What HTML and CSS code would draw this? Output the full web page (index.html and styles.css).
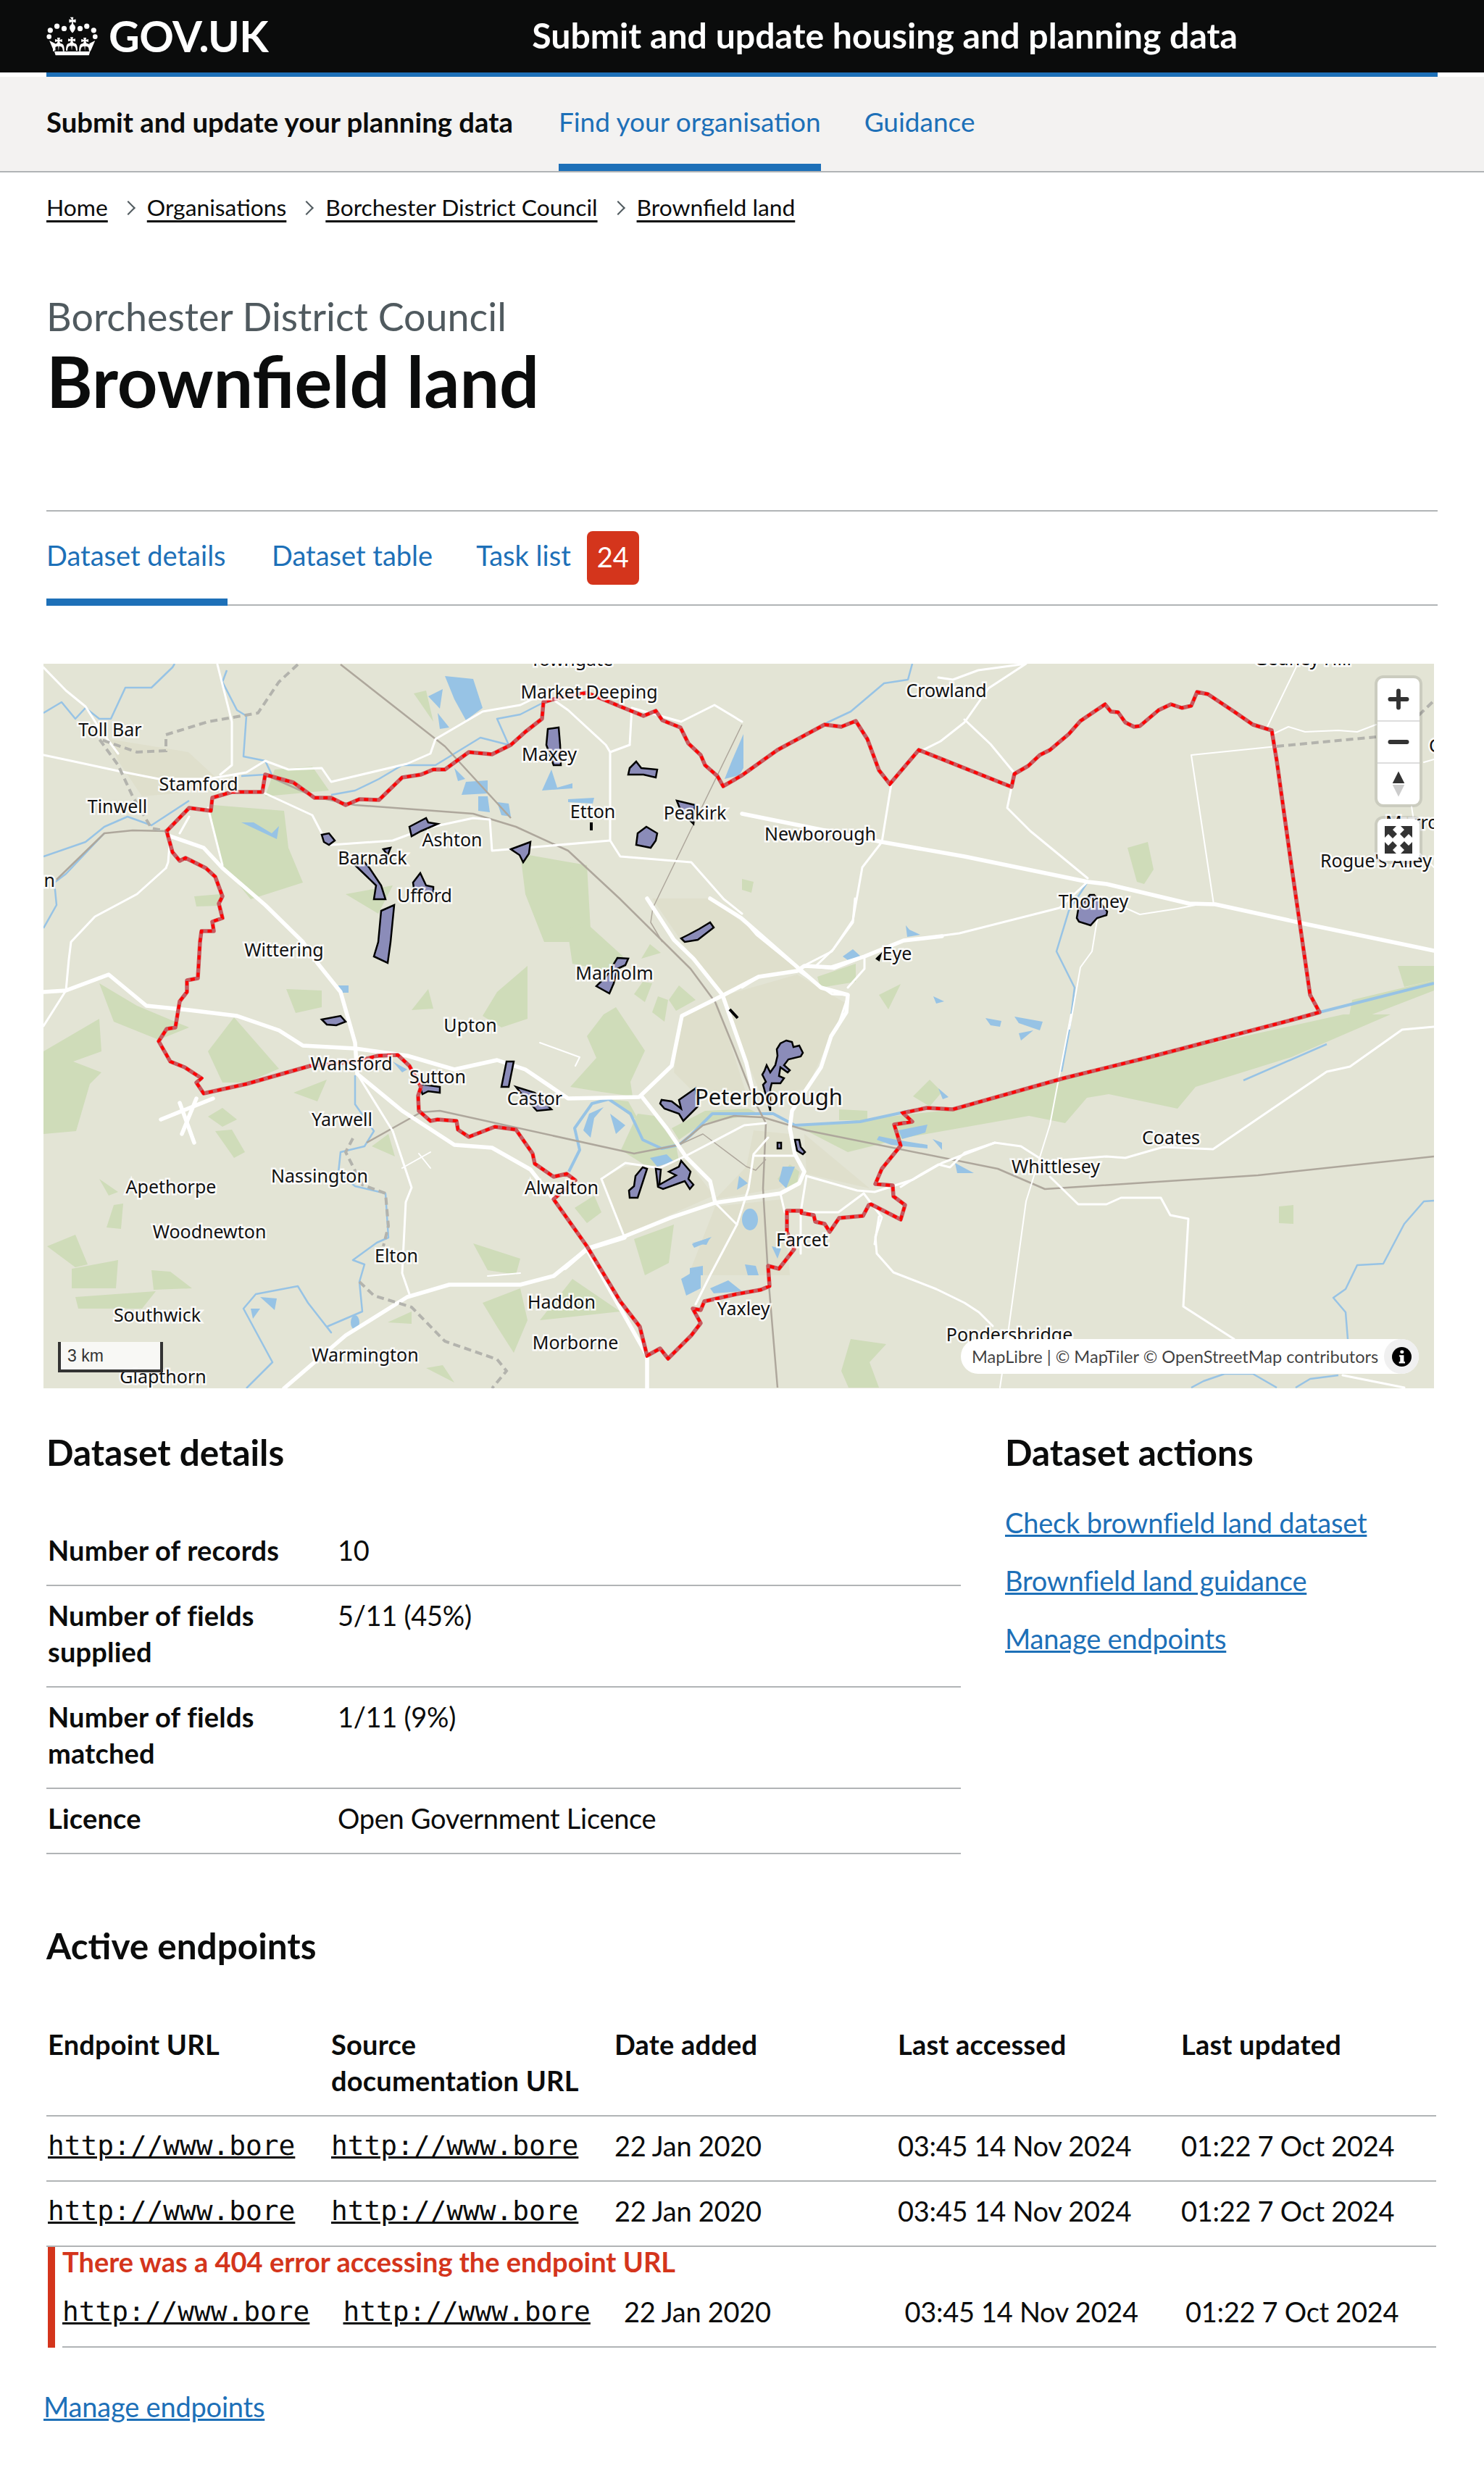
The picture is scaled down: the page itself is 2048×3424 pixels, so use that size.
FILE: index.html
```html
<!DOCTYPE html>
<html lang="en">
<head>
  <meta charset="utf-8">
  <title>Brownfield land - Submit and update housing and planning data</title>
  <link rel="stylesheet" href="styles.css">
</head>
<body>

<header class="top-bar">
  <a class="logo" href="#">
    <svg class="crown" viewBox="25 28 216 164" aria-hidden="true">
      <g fill="#fff">
        <circle cx="40" cy="85" r="11"/><circle cx="68" cy="68" r="11"/><circle cx="98" cy="78" r="11"/>
        <circle cx="165" cy="78" r="11"/><circle cx="193" cy="68" r="11"/><circle cx="222" cy="85" r="11"/>
        <circle cx="35" cy="112" r="10"/><circle cx="228" cy="112" r="10"/>
        <path d="M123 30h14l-2 12 12-3v14l-12-3 2 10c6 4 8 10 8 14 0 8-6 16-12 22-6-6-12-14-12-22 0-4 2-10 8-14l2-10-12 3V39l12 3z"/>
        <path d="M57 174h150l-5 16H62z"/>
        <path d="M36 128l24 12 2 30h-8zM228 128l-24 12-2 30h8z"/>
        <path id="fleur" d="M124 114h12l-2 9 11-3v12l-11-3 2 8 10 4c6 4 8 12 8 30h-6c0-12-4-20-10-20l-6-1-2 21-2-21-6 1c-6 0-10 8-10 20h-6c0-18 2-26 8-30l10-4 2-8-11 3v-12l11 3z"/>
        <use href="#fleur" x="-55" y="2"/>
        <use href="#fleur" x="55" y="2"/>
      </g>
    </svg>
    <span class="logo-text">GOV.UK</span>
  </a>
  <a class="service-title" href="#">Submit and update housing and planning data</a>
</header>
<div class="blue-rule"></div>

<nav class="service-nav">
  <strong class="service-name">Submit and update your planning data</strong>
  <a class="service-link active" href="#">Find your organisation</a>
  <a class="service-link" href="#">Guidance</a>
</nav>

<main class="page">
  <ol class="breadcrumbs">
    <li><a href="#">Home</a></li>
    <li><a href="#">Organisations</a></li>
    <li><a href="#">Borchester District Council</a></li>
    <li><a href="#">Brownfield land</a></li>
  </ol>

  <span class="caption">Borchester District Council</span>
  <h1 class="title">Brownfield land</h1>

  <div class="tabs">
    <a class="tab active" href="#">Dataset details</a>
    <a class="tab" href="#">Dataset table</a>
    <a class="tab" href="#">Task list</a>
    <span class="badge">24</span>
  </div>

  <div class="map">
    <svg class="map-canvas" viewBox="60 916 1919 1000" aria-label="Map of Borchester District Council">
      <!-- built up -->
      <g class="urban">
        <polygon points="900,1240 980,1240 1047,1290 1103,1340 1047,1348 993,1373 957,1323"/>
        <polygon points="995,1375 1100,1345 1168,1385 1147,1430 1113,1503 1050,1510 1025,1450"/>
        <polygon points="940,1400 990,1383 1030,1510 960,1510 930,1480"/>
        <polygon points="1040,1560 1090,1565 1105,1620 1075,1640 987,1655 1030,1610"/>
        <polygon points="1110,1565 1200,1640 1113,1620"/>
        <polygon points="830,1627 863,1610 947,1600 985,1650 860,1705"/>
        <polygon points="150,1020 260,1038 300,1075 287,1091 196,1099 163,1050"/>
        <polygon points="987,1665 1080,1655 1090,1760 950,1760"/>
      </g>
      <!-- woodland -->
      <g class="wood">
        <polygon points="294,1111 392,1119 398,1170 418,1218 346,1241 304,1190 291,1123"/>
        <polygon points="379,1062 431,1058 454,1091 366,1099"/>
        <polygon points="718,1178 810,1194 816,1300 751,1300 725,1234"/>
        <polygon points="477,1234 542,1222 522,1261"/>
        <polygon points="268,1237 304,1234 304,1250 271,1251"/>
        <polygon points="571,957 588,953 598,996"/>
        <polygon points="60,1451 137,1406 140,1451 101,1465 140,1480 124,1496 105,1561 60,1565"/>
        <polygon points="137,1357 189,1388 261,1418 219,1435 157,1410"/>
        <polygon points="287,1451 323,1404 385,1475 340,1494 307,1494"/>
        <polygon points="405,1508 451,1490 438,1520"/>
        <polygon points="287,1541 307,1529 327,1545 307,1555"/>
        <polygon points="297,1561 320,1559 338,1590 323,1598"/>
        <polygon points="513,1582 536,1565 545,1596"/>
        <polygon points="395,1365 444,1367 444,1390 408,1398"/>
        <polygon points="568,1394 591,1365 598,1392"/>
        <polygon points="666,1402 686,1369 728,1333 728,1406 692,1418"/>
        <polygon points="787,1500 823,1460 810,1430 833,1400 850,1390 870,1420 890,1450 870,1493 873,1513 830,1507"/>
        <polygon points="783,1283 807,1272 860,1320 840,1340 790,1330"/>
        <polygon points="875,1372 887,1355 900,1357 890,1383"/>
        <polygon points="900,1397 908,1375 922,1380 917,1410"/>
        <polygon points="885,1323 897,1303 912,1315"/>
        <polygon points="923,1380 937,1360 960,1380 933,1395"/>
        <polygon points="880,1537 903,1540 933,1580 937,1603 893,1610 857,1587"/>
        <polygon points="840,1517 867,1520 882,1547 870,1540"/>
        <polygon points="927,1557 973,1533 1033,1530 1047,1537 970,1550 937,1573"/>
        <polygon points="1073,1627 1090,1607 1103,1617 1100,1633 1087,1640"/>
        <polygon points="793,1667 820,1650 830,1673 810,1688"/>
        <polygon points="875,1710 930,1690 923,1743 890,1760"/>
        <polygon points="653,1716 718,1737 712,1759 673,1753"/>
        <polygon points="666,1798 718,1778 728,1822 709,1867 686,1831"/>
        <polygon points="745,1822 790,1765 856,1810"/>
        <polygon points="104,1704 121,1745 104,1749 65,1720"/>
        <polygon points="147,1694 157,1663 170,1661 167,1696"/>
        <polygon points="99,1751 163,1739 160,1778 99,1778"/>
        <polygon points="209,1753 235,1755 265,1778 212,1780"/>
        <polygon points="104,1790 215,1782 196,1806 108,1806"/>
        <polygon points="137,1627 163,1645 150,1650"/>
        <polygon points="535,1825 568,1810 568,1827"/>
        <polygon points="588,1888 611,1884 627,1908"/>
        <polygon points="1102,1555 1318,1531 1468,1490 1586,1459 1854,1400 1919,1400 1782,1459 1650,1500 1625,1530 1530,1510 1500,1515 1470,1550 1420,1540 1250,1570 1170,1590"/>
        <polygon points="1866,1380 1979,1353 1979,1367 1860,1413"/>
        <polygon points="1929,1333 1979,1333 1979,1353 1938,1362"/>
        <polygon points="1556,1170 1584,1162 1592,1200 1579,1220 1569,1217"/>
        <polygon points="1128,1348 1181,1330 1181,1355 1132,1363"/>
        <polygon points="1213,1373 1243,1358 1226,1393"/>
        <polygon points="1024,1213 1040,1217 1037,1232 1024,1228"/>
        <polygon points="1260,1513 1283,1490 1300,1507 1283,1527"/>
        <polygon points="1765,1665 1785,1663 1785,1689 1765,1688"/>
        <polygon points="1174,1848 1223,1855 1200,1880 1213,1915 1171,1915 1161,1892"/>
        <polygon points="1158,1531 1197,1533 1197,1546 1158,1546"/>
      </g>
      <!-- water -->
      <g class="lake">
        <polygon points="614,933 653,937 666,977 643,994 627,965"/>
        <polygon points="591,961 611,951 607,978"/>
        <polygon points="604,984 620,1004 607,1006"/>
        <polygon points="627,1060 642,1075 632,1078"/>
        <polygon points="643,1079 673,1077 673,1095 637,1097"/>
        <polygon points="660,1099 673,1099 676,1121 660,1119"/>
        <polygon points="686,1107 702,1109 705,1127 692,1125"/>
        <polygon points="761,1062 769,1087 790,1081 790,1088 748,1091"/>
        <polygon points="784,1103 820,1101 818,1109 784,1107"/>
        <polygon points="1026,1013 1010,1050 1000,1075 1020,1070 1026,1060"/>
        <polygon points="333,1135 350,1135 375,1150 385,1140 382,1158 365,1150"/>
        <polygon points="805,1560 813,1537 833,1528 820,1543 815,1570"/>
        <polygon points="842,1537 863,1553 850,1565"/>
        <polygon points="897,1598 920,1593 930,1603 907,1610"/>
        <polygon points="1080,1610 1097,1610 1085,1640 1075,1630"/>
        <polygon points="1020,1623 1032,1633 1017,1642"/>
        <ellipse cx="1035" cy="1683" rx="11" ry="15"/>
        <polygon points="955,1717 982,1707 975,1715 958,1722"/>
        <polygon points="1065,1720 1078,1723 1073,1737"/>
        <polygon points="952,1750 970,1747 970,1760 952,1760"/>
        <polygon points="1028,1745 1043,1747 1047,1760 1032,1760"/>
        <polygon points="1163,1320 1177,1310 1188,1320 1170,1325"/>
        <polygon points="1250,1277 1255,1283 1270,1290 1252,1293"/>
        <polygon points="1288,1375 1303,1382 1292,1385"/>
        <polygon points="1213,1568 1237,1573 1280,1580 1280,1585 1230,1580 1210,1573"/>
        <polygon points="1240,1560 1280,1552 1277,1563 1245,1572"/>
        <polygon points="1287,1572 1300,1577 1300,1587"/>
        <polygon points="1360,1405 1382,1409 1380,1417 1367,1415"/>
        <polygon points="1400,1403 1439,1410 1435,1422 1406,1412"/>
        <polygon points="1406,1426 1426,1422 1409,1436"/>
        <polygon points="1295,1502 1309,1514 1301,1517"/>
        <polygon points="1318,1605 1344,1619 1321,1619"/>
        <polygon points="467,1360 481,1360 481,1370 467,1370"/>
        <polygon points="542,1465 562,1476 555,1480"/>
        <polygon points="940,1765 967,1749 967,1778 947,1788"/>
        <polygon points="980,1778 1005,1767 1024,1782 985,1785"/>
        <polygon points="955,1716 980,1708 975,1718"/>
        <polygon points="359,1790 382,1792 379,1808"/>
        <polygon points="346,1806 359,1806 349,1820"/>
        <ellipse cx="490" cy="1825" rx="6" ry="10"/>
      </g>
      <g class="river">
        <polyline points="60,984 85,969 104,992 118,977 137,992 153,992 173,949 209,949 238,921 241,916"/>
        <polyline points="313,925 307,941 327,980 340,988 336,1044 366,1050 375,1069"/>
        <polyline points="333,1071 366,1069"/>
        <polyline points="457,1097 490,1091 523,1075 555,1056 601,1056 663,1018 702,1028 686,992 718,986 751,969"/>
        <polyline points="60,1182 118,1162 144,1141 176,1127 209,1139 261,1105"/>
        <polyline points="60,1281 78,1249 75,1218 91,1206 144,1150"/>
        <polyline points="490,1484 490,1524 516,1561 503,1582 470,1590 467,1618 490,1637 532,1647 536,1708 520,1715 487,1739 503,1745 496,1769 500,1810 451,1831 457,1839 425,1798 411,1775 353,1786 336,1806 376,1880 340,1916"/>
        <polyline class="wide" points="785,1617 800,1587 793,1557 817,1523 840,1517 870,1537 887,1573 913,1585 937,1580 953,1567 983,1537 1067,1537 1097,1553 1187,1548 1247,1535 1255,1533"/>
        <polyline class="wide" points="1821,1397 1979,1357"/>
        <polyline points="1716,1491 1831,1441"/>
        <polyline points="1259,916 1253,938 1220,943 1174,982 1142,997 1073,1035"/>
        <polyline points="1501,1217 1475,1257 1458,1313 1483,1363 1476,1420 1465,1479"/>
        <polyline points="1979,1657 1965,1658 1938,1689 1909,1744 1873,1746 1857,1779 1840,1791 1857,1811 1860,1848"/>
        <polyline points="1644,1915 1661,1906 1690,1896 1729,1896 1762,1915"/>
        <polyline points="1788,1915 1808,1903 1847,1898"/>
      </g>
      <!-- railways -->
      <g class="rail">
        <polyline points="470,917 614,1030 705,1129"/>
        <polyline points="366,1069 435,1100 490,1111 653,1123 712,1141 784,1174 855,1240 953,1337 987,1383 1013,1447 1043,1523 1057,1550 1053,1640 1060,1760 1073,1915"/>
        <polyline points="78,1214 144,1150 183,1146 230,1147"/>
        <polyline points="506,1577 581,1535 607,1533 875,1592 937,1580 970,1553 1013,1540 1053,1542 1113,1560 1377,1613 1442,1641 1736,1622 1979,1596"/>
        <polyline class="thin" points="937,1580 970,1565 1030,1610 1043,1615 1057,1600"/>
        <polyline class="thin" points="1024,1000 901,1253 898,1273 914,1300"/>
      </g>
      <!-- roads -->
      <g class="road">
        <polyline points="60,921 91,953 118,975 137,1005 163,1040"/>
        <polyline points="60,1042 98,1050 163,1064 219,1075 287,1075 340,1066 366,1050 398,1062 444,1060 457,1079 562,1054 594,1040 601,1020 666,982 718,973 751,957 784,980 836,1028 842,1038 842,1160 856,1182 954,1190 999,1241 1024,1261"/>
        <polyline points="300,917 320,996 320,1056 304,1069"/>
        <polyline class="major" points="235,1154 281,1170 307,1198 366,1249 418,1300 438,1329 470,1369 490,1439 493,1482 555,1533 627,1580 679,1584 732,1614 764,1655"/>
        <polyline points="366,1095 431,1125 444,1150 457,1166 542,1160 588,1143 653,1129 676,1131 679,1174 842,1160"/>
        <polyline points="869,1028 872,977 940,996 986,973 1024,996"/>
        <polyline points="842,1038 869,1028"/>
        <polyline class="major" points="60,1369 91,1367 150,1345 202,1388 261,1394 327,1402 385,1422 418,1443 490,1447 562,1457 627,1476 686,1463 725,1476 784,1516 882,1514 927,1471 941,1402 999,1373 1047,1348 1100,1340 1110,1333 1147,1335 1193,1320 1247,1298 1300,1292"/>
        <polyline class="major" points="893,1240 930,1297 957,1323 997,1373 1017,1430 1030,1467 1043,1523"/>
        <polyline class="major" points="980,1240 1023,1267 1103,1337 1133,1363 1170,1373 1168,1397 1147,1430 1133,1473 1113,1503 1093,1533 1090,1557 1097,1593 1110,1617 1103,1633 1077,1647 987,1660 927,1680 860,1707 810,1723 780,1750 810,1724 893,1871 893,1916"/>
        <polyline points="1180,1240 1177,1273 1150,1310 1127,1332"/>
        <polyline points="1193,1323 1193,1337 1170,1363"/>
        <polyline class="major" points="887,1515 920,1557 947,1597 980,1630 987,1660"/>
        <polyline points="947,1595 1027,1553 1057,1550"/>
        <polyline points="830,1627 863,1605 910,1612 947,1595"/>
        <polyline points="830,1627 862,1708"/>
        <polyline points="1113,1623 1183,1643 1207,1645 1260,1628 1300,1605 1373,1577"/>
        <polyline points="1113,1623 1105,1673 1105,1730"/>
        <polyline points="1077,1647 1083,1673"/>
        <polyline points="987,1660 1017,1690 1033,1640 1040,1593 1060,1570"/>
        <polyline points="1040,1595 1097,1595"/>
        <polyline points="1017,1690 980,1760 960,1800"/>
        <polyline points="1192,1647 1217,1680 1208,1707 1210,1730 1233,1756 1292,1779 1331,1798 1351,1811 1370,1830"/>
        <polyline points="1113,1673 1157,1673 1192,1647"/>
        <polyline points="1243,1638 1272,1620 1295,1607 1311,1611 1331,1591 1373,1577 1409,1582 1442,1603 1527,1596 1553,1598 1605,1583 1674,1586 1831,1479 1863,1472 1935,1421 1979,1417"/>
        <polyline points="1449,1624 1488,1662 1527,1662 1547,1653 1602,1653 1615,1677 1640,1682 1633,1803 1703,1848"/>
        <polyline class="fine" points="1478,1400 1449,1552 1416,1658 1390,1848 1380,1915"/>
        <polyline class="major" points="1024,1123 1217,1162 1331,1182 1501,1217 1527,1220 1641,1247 1677,1248 1801,1275 1979,1312"/>
        <polyline points="1295,935 1315,938 1350,925 1416,916 1364,950 1331,997 1298,1023 1268,1038"/>
        <polyline points="1331,993 1367,1027 1400,1067 1390,1115 1422,1147 1501,1212"/>
        <polyline points="1230,1082 1217,1162 1190,1197 1177,1270 1148,1313 1109,1333"/>
        <polyline points="1501,1217 1462,1253 1324,1288 1249,1298 1151,1337 1109,1333"/>
        <polyline points="1024,1267 1044,1290 1102,1337"/>
        <polyline points="1024,1363 1050,1347 1102,1340 1148,1372 1171,1373 1155,1420"/>
        <polyline class="fine" points="1514,1270 1507,1313 1491,1335 1476,1420"/>
        <polyline class="fine" points="1553,1253 1573,1262 1625,1254 1665,1246"/>
        <polyline class="fine" points="1762,1030 1644,1042 1675,1248"/>
        <polyline class="fine" points="1791,916 1749,1003"/>
        <polyline class="fine" points="1759,1012 1778,1003 1801,1010 1847,1008 1873,1010 1899,1000"/>
        <polyline class="fine" points="1965,1052 1979,1048"/>
        <polyline class="fine" points="1948,1113 1958,1177 1979,1197"/>
        <polyline points="229,1198 189,1234 131,1265 98,1300 95,1324 91,1367 60,1416"/>
        <polyline points="235,1154 232,1190 229,1198"/>
        <polyline points="261,1127 248,1150"/>
        <polyline points="287,1115 307,1194"/>
        <polyline class="major" points="222,1545 294,1516"/>
        <polyline class="major" points="248,1522 268,1577"/>
        <polyline class="major" points="271,1516 251,1565"/>
        <polyline class="fine" points="555,1612 594,1590"/>
        <polyline class="fine" points="578,1592 594,1612"/>
        <polyline class="fine" points="673,1761 718,1757"/>
        <polyline class="fine" points="745,1439 800,1459 794,1471"/>
        <polyline points="493,1482 542,1561 568,1639 560,1659 555,1757 565,1786"/>
        <polyline class="major" points="392,1916 477,1843 562,1790 620,1773 718,1773 764,1761 810,1724 862,1708"/>
        <polyline points="1853,1898 1938,1915"/>
        <polyline points="1213,1679 1207,1717"/>
      </g>
      <g class="border-dash">
        <polyline points="411,917 385,941 356,984 287,996 229,1014 229,1036 189,1038 137,1020 163,1056 183,1099 209,1143 230,1147"/>
        <polyline points="487,1571 477,1590 500,1635 532,1647 536,1692 529,1720"/>
        <polyline points="496,1769 516,1788 568,1804 614,1851 686,1876 699,1892 679,1916"/>
        <polyline points="1762,1030 1899,1017"/>
        <polyline points="1958,987 1979,967"/>
      </g>
      <!-- sites -->
      <g class="site">
        <polygon points="940,1295 950,1290 965,1282 980,1273 985,1280 963,1297 945,1300"/>
        <polygon points="852,1322 867,1323 863,1332 852,1337 847,1357 841,1371 823,1361 837,1347"/>
        <polygon points="1085,1436 1093,1438 1095,1445 1103,1443 1108,1453 1105,1458 1088,1462 1082,1470 1090,1477 1087,1480 1077,1473 1075,1485 1082,1488 1077,1495 1065,1495 1063,1503 1063,1533 1053,1497 1057,1493 1052,1483 1055,1478 1058,1470 1063,1480 1070,1470 1073,1457 1072,1448 1077,1440"/>
        <polygon points="960,1502 963,1527 943,1547 937,1537 917,1530 911,1523 913,1518 927,1520 940,1530 937,1518"/>
        <polygon points="887,1611 893,1613 880,1653 869,1653 868,1643 875,1637 877,1623"/>
        <polygon points="905,1613 912,1614 910,1635 933,1622 923,1617 937,1610 940,1602 953,1617 950,1627 957,1635 952,1641 945,1630 915,1641 908,1638"/>
        <rect x="1073" y="1577" width="5" height="8"/>
        <polygon points="1097,1573 1103,1573 1105,1583 1111,1590 1108,1593 1100,1588"/>
        <polygon points="1210,1323 1215,1318 1213,1325"/>
        <polygon points="1504,1235 1510,1235 1528,1258 1527,1263 1514,1267 1505,1277 1489,1272 1486,1267 1488,1255"/>
        <polygon points="756,1006 771,1004 773,1028 774,1056 764,1056 754,1028"/>
        <polygon points="878,1051 885,1060 907,1062 905,1073 888,1069 867,1069 869,1060"/>
        <polygon points="934,1105 959,1111 957,1137 940,1120"/>
        <polygon points="880,1150 892,1141 907,1150 905,1160 898,1170 878,1166"/>
        <polygon points="565,1141 588,1129 591,1135 604,1137 581,1147 568,1154"/>
        <polygon points="705,1172 732,1162 730,1178 722,1190 717,1180"/>
        <polygon points="444,1152 454,1150 462,1160 454,1166 447,1162"/>
        <polygon points="490,1194 503,1190 510,1198 526,1222 532,1241 516,1241 519,1222"/>
        <polygon points="529,1172 539,1170 535,1180"/>
        <polygon points="570,1218 580,1205 588,1222 598,1224 598,1233 572,1232"/>
        <polygon points="526,1257 544,1249 539,1300 535,1329 516,1320 522,1300"/>
        <polygon points="444,1407 470,1402 477,1410 464,1415 451,1414"/>
        <polygon points="578,1496 607,1500 607,1508 591,1506 583,1510"/>
        <polygon points="699,1465 709,1465 702,1500 692,1500"/>
        <polygon points="712,1500 738,1508 761,1531 741,1533 720,1510"/>
        <polyline points="1007,1393 1018,1405"/>
        <polyline points="816,1135 816,1146"/>
      </g>
      <!-- organisation boundary -->
      <polygon class="boundary" points="230,1147 261,1115 291,1119 293,1101 320,1093 362,1093 366,1069 405,1080 434,1101 457,1101 477,1111 496,1103 523,1104 555,1073 581,1069 598,1062 614,1062 647,1038 679,1041 705,1028 725,1010 748,992 750,969 771,963 810,956 856,975 888,988 905,981 914,994 939,1004 950,1026 967,1042 973,1056 990,1071 998,1085 1024,1070 1073,1035 1138,1000 1161,1003 1181,995 1197,1020 1213,1063 1228,1082 1268,1035 1396,1086 1400,1068 1419,1057 1435,1042 1449,1035 1475,1013 1491,995 1525,972 1533,982 1543,983 1553,997 1565,1003 1573,1002 1599,980 1616,972 1631,977 1644,974 1652,955 1667,958 1703,982 1729,1000 1755,1008 1762,1050 1782,1193 1808,1373 1821,1397 1785,1407 1586,1459 1468,1488 1315,1531 1279,1529 1246,1536 1259,1548 1234,1552 1243,1581 1217,1613 1208,1634 1232,1636 1233,1651 1249,1663 1243,1683 1202,1662 1199,1663 1191,1678 1158,1681 1145,1700 1138,1689 1125,1686 1123,1677 1106,1674 1106,1671 1086,1671 1086,1700 1096,1724 1075,1751 1060,1747 1062,1775 1050,1780 1016,1786 972,1796 967,1808 956,1806 967,1826 954,1843 922,1875 911,1861 893,1871 883,1831 856,1796 810,1720 764,1655 794,1629 782,1620 764,1624 738,1606 735,1592 712,1559 683,1555 647,1569 632,1559 630,1547 604,1545 594,1547 578,1533 577,1512 581,1500 565,1471 549,1456 522,1457 490,1465 428,1471 340,1496 281,1509 271,1494 278,1488 255,1473 235,1465 219,1437 230,1420 242,1418 248,1382 258,1369 258,1353 273,1350 276,1300 278,1285 295,1285 293,1272 307,1267 302,1247 307,1237 297,1210 284,1198 256,1184 248,1188 238,1176"/>
      <polygon class="boundary-dash" points="230,1147 261,1115 291,1119 293,1101 320,1093 362,1093 366,1069 405,1080 434,1101 457,1101 477,1111 496,1103 523,1104 555,1073 581,1069 598,1062 614,1062 647,1038 679,1041 705,1028 725,1010 748,992 750,969 771,963 810,956 856,975 888,988 905,981 914,994 939,1004 950,1026 967,1042 973,1056 990,1071 998,1085 1024,1070 1073,1035 1138,1000 1161,1003 1181,995 1197,1020 1213,1063 1228,1082 1268,1035 1396,1086 1400,1068 1419,1057 1435,1042 1449,1035 1475,1013 1491,995 1525,972 1533,982 1543,983 1553,997 1565,1003 1573,1002 1599,980 1616,972 1631,977 1644,974 1652,955 1667,958 1703,982 1729,1000 1755,1008 1762,1050 1782,1193 1808,1373 1821,1397 1785,1407 1586,1459 1468,1488 1315,1531 1279,1529 1246,1536 1259,1548 1234,1552 1243,1581 1217,1613 1208,1634 1232,1636 1233,1651 1249,1663 1243,1683 1202,1662 1199,1663 1191,1678 1158,1681 1145,1700 1138,1689 1125,1686 1123,1677 1106,1674 1106,1671 1086,1671 1086,1700 1096,1724 1075,1751 1060,1747 1062,1775 1050,1780 1016,1786 972,1796 967,1808 956,1806 967,1826 954,1843 922,1875 911,1861 893,1871 883,1831 856,1796 810,1720 764,1655 794,1629 782,1620 764,1624 738,1606 735,1592 712,1559 683,1555 647,1569 632,1559 630,1547 604,1545 594,1547 578,1533 577,1512 581,1500 565,1471 549,1456 522,1457 490,1465 428,1471 340,1496 281,1509 271,1494 278,1488 255,1473 235,1465 219,1437 230,1420 242,1418 248,1382 258,1369 258,1353 273,1350 276,1300 278,1285 295,1285 293,1272 307,1267 302,1247 307,1237 297,1210 284,1198 256,1184 248,1188 238,1176"/>
      <!-- place names -->
      <g class="place">
        <text x="789" y="919">Towngate</text>
        <text x="1798" y="918">Gedney Hill</text>
        <text x="813" y="964">Market Deeping</text>
        <text x="1306" y="962">Crowland</text>
        <text x="152" y="1016">Toll Bar</text>
        <text x="274" y="1091">Stamford</text>
        <text x="162" y="1122">Tinwell</text>
        <text x="758" y="1050">Maxey</text>
        <text x="818" y="1129">Etton</text>
        <text x="959" y="1131">Peakirk</text>
        <text x="624" y="1168">Ashton</text>
        <text x="514" y="1193">Barnack</text>
        <text x="586" y="1245">Ufford</text>
        <text x="1132" y="1160">Newborough</text>
        <text x="1509" y="1253">Thorney</text>
        <text x="1238" y="1325">Eye</text>
        <text x="1899" y="1197">Rogue's Alley</text>
        <text class="from-start" x="1912" y="1144">Murrow</text>
        <text class="from-start" x="1972" y="1038">Cowbit</text>
        <text class="from-end" x="76" y="1224">Ketton</text>
        <text x="392" y="1320">Wittering</text>
        <text x="848" y="1352">Marholm</text>
        <text x="649" y="1424">Upton</text>
        <text x="485" y="1477">Wansford</text>
        <text x="604" y="1495">Sutton</text>
        <text x="738" y="1525">Castor</text>
        <text class="city" x="1061" y="1525">Peterborough</text>
        <text x="472" y="1554">Yarwell</text>
        <text x="441" y="1632">Nassington</text>
        <text x="236" y="1647">Apethorpe</text>
        <text x="775" y="1648">Alwalton</text>
        <text x="1616" y="1579">Coates</text>
        <text x="1457" y="1619">Whittlesey</text>
        <text x="289" y="1709">Woodnewton</text>
        <text x="1107" y="1720">Farcet</text>
        <text x="547" y="1742">Elton</text>
        <text x="775" y="1806">Haddon</text>
        <text x="1026" y="1815">Yaxley</text>
        <text x="217" y="1824">Southwick</text>
        <text x="794" y="1862">Morborne</text>
        <text x="504" y="1879">Warmington</text>
        <text x="1393" y="1851">Pondersbridge</text>
        <text x="225" y="1909">Glapthorn</text>
      </g>
    </svg>

    <div class="map-controls">
      <button class="ctrl-btn" type="button" aria-label="Zoom in">
        <svg viewBox="0 0 24 24"><path class="glyph-line" d="M5.700 12h12.600M12 5.700v12.600"/></svg>
      </button>
      <button class="ctrl-btn" type="button" aria-label="Zoom out">
        <svg viewBox="0 0 24 24"><path class="glyph-line" d="M5.700 12h12.600"/></svg>
      </button>
      <button class="ctrl-btn" type="button" aria-label="Reset bearing">
        <svg viewBox="0 0 24 24"><path fill="#333" d="M12 2.500l4.500 9h-9z"/><path fill="#ccc" d="M7.500 12.500h9l-4.500 9z"/></svg>
      </button>
    </div>
    <button class="fullscreen-btn" type="button" aria-label="Fullscreen">
      <svg viewBox="0 0 38 38">
        <path fill="#333" d="M0 0h16l-5 5 6 6-6 6-6-6-5 5zM38 0H22l5 5-6 6 6 6 6-6 5 5zM0 38h16l-5-5 6-6-6-6-6 6-5-5zM38 38H22l5-5-6-6 6-6 6 6 5-5z"/>
      </svg>
    </button>
    <div class="scale-bar">3 km</div>
    <div class="attribution">
      <span class="attribution-text">MapLibre | © MapTiler © OpenStreetMap contributors</span>
      <span class="info-btn">
        <svg viewBox="0 0 24 24"><circle cx="12" cy="12" r="12" fill="#000"/><rect x="10" y="4" width="4.600" height="4" rx="2" fill="#fff"/><path fill="#fff" d="M9 10h5.600v8H16v2H8.600v-2H10v-6H9z"/></svg>
      </span>
    </div>
  </div>

  <div class="columns">
    <section class="details">
      <h2 class="heading">Dataset details</h2>
      <table class="summary">
        <tr><th>Number of records</th><td>10</td></tr>
        <tr><th>Number of fields supplied</th><td>5/11 (45%)</td></tr>
        <tr><th>Number of fields matched</th><td>1/11 (9%)</td></tr>
        <tr><th>Licence</th><td>Open Government Licence</td></tr>
      </table>
    </section>
    <aside class="actions">
      <h2 class="heading">Dataset actions</h2>
      <ul class="action-list">
        <li><a href="#">Check brownfield land dataset</a></li>
        <li><a href="#">Brownfield land guidance</a></li>
        <li><a href="#">Manage endpoints</a></li>
      </ul>
    </aside>
  </div>

  <h2 class="heading endpoints-heading">Active endpoints</h2>
  <table class="endpoints">
    <tr>
      <th>Endpoint URL</th><th>Source documentation URL</th><th>Date added</th><th>Last accessed</th><th>Last updated</th>
    </tr>
    <tr>
      <td><a class="url" href="#">http://www.bore</a></td><td><a class="url" href="#">http://www.bore</a></td><td>22 Jan 2020</td><td>03:45 14 Nov 2024</td><td>01:22 7 Oct 2024</td>
    </tr>
    <tr>
      <td><a class="url" href="#">http://www.bore</a></td><td><a class="url" href="#">http://www.bore</a></td><td>22 Jan 2020</td><td>03:45 14 Nov 2024</td><td>01:22 7 Oct 2024</td>
    </tr>
  </table>
  <div class="endpoint-error">
    <p class="error-message">There was a 404 error accessing the endpoint URL</p>
    <table class="endpoints nested">
      <tr>
        <td><a class="url" href="#">http://www.bore</a></td><td><a class="url" href="#">http://www.bore</a></td><td>22 Jan 2020</td><td>03:45 14 Nov 2024</td><td>01:22 7 Oct 2024</td>
      </tr>
    </table>
  </div>

  <a class="manage-link" href="#">Manage endpoints</a>
</main>

</body>
</html>
```

FILE: styles.css
```css
* {
  box-sizing: border-box;
}

body {
  margin: 0;
  background: #fff;
  color: #0b0c0c;
  font-family: "Lato", "Liberation Sans", sans-serif;
  font-size: 38px;
  line-height: 50px;
}

a {
  color: #1d70b8;
}

/* header */
.top-bar {
  display: flex;
  align-items: center;
  height: 100px;
  padding: 0 64px;
  background: #0b0c0c;
}

.logo {
  display: flex;
  align-items: center;
  color: #fff;
  text-decoration: none;
}

.crown {
  width: 72px;
  height: 54px;
  margin-right: 14px;
}

.logo-text {
  font-size: 59px;
  font-weight: 700;
  line-height: 60px;
  letter-spacing: -0.5px;
}

.service-title {
  margin-left: 364px;
  padding-bottom: 4px;
  color: #fff;
  font-size: 48.2px;
  font-weight: 700;
  text-decoration: none;
}

.blue-rule {
  height: 6px;
  margin: 0 64px;
  background: #1d70b8;
}

.service-nav {
  display: flex;
  height: 132px;
  padding: 0 64px;
  background: #f3f2f1;
  border-bottom: 2px solid #b1b4b6;
  font-size: 37px;
}

.service-name {
  align-self: center;
  margin-right: 63px;
  padding-bottom: 6px;
  font-size: 38.3px;
}

.service-link {
  height: 130px;
  margin-right: 60px;
  padding-top: 37px;
  text-decoration: none;
}

.service-link.active {
  border-bottom: 10px solid #1d70b8;
}

/* page */
.page {
  padding: 0 64px 76px;
}

.breadcrumbs {
  display: flex;
  margin: 28px 0 0;
  padding: 0;
  list-style: none;
  font-size: 31.8px;
  line-height: 40px;
}

.breadcrumbs li + li {
  position: relative;
  margin-left: 54px;
}

.breadcrumbs li + li::before {
  content: "";
  position: absolute;
  top: 14px;
  left: -33px;
  width: 12px;
  height: 12px;
  border-top: 2px solid #505a5f;
  border-right: 2px solid #505a5f;
  transform: rotate(45deg);
}

.breadcrumbs a {
  color: #0b0c0c;
  text-underline-offset: 6px;
}

.caption {
  display: block;
  margin-top: 95px;
  color: #505a5f;
  font-size: 53.8px;
  line-height: 70px;
}

.title {
  margin: 5px 0 128px;
  font-size: 97px;
  font-weight: 700;
  line-height: 100px;
}

.tabs {
  display: flex;
  height: 132px;
  border-top: 2px solid #b1b4b6;
  border-bottom: 2px solid #b1b4b6;
}

.tab {
  height: 130px;
  margin-right: 60px;
  padding-top: 35px;
  text-decoration: none;
}

.tab.active {
  width: 250px;
  margin-right: 61px;
  border-bottom: 10px solid #1d70b8;
}

.tab:nth-child(3) {
  margin-right: 22px;
}

.badge {
  align-self: flex-start;
  width: 72px;
  height: 74px;
  margin-top: 27px;
  border-radius: 8px;
  background: #d4351c;
  color: #fff;
  line-height: 70px;
  text-align: center;
}

/* map */
.map {
  position: relative;
  width: 1919px;
  height: 1000px;
  margin: 80px 0 0 -4px;
  overflow: hidden;
  background: #e3e4d5;
}

.map-canvas {
  display: block;
  width: 1919px;
  height: 1000px;
}

.urban polygon {
  fill: #dfdfcc;
}

.wood polygon {
  fill: #cfdcb9;
}

.lake polygon,
.lake ellipse {
  fill: #97c3e5;
}

.river polyline {
  fill: none;
  stroke: #97c3e5;
  stroke-width: 2.5;
  stroke-linejoin: round;
}

.river .wide {
  stroke-width: 4;
}

.rail polyline {
  fill: none;
  stroke: #aea79c;
  stroke-width: 2.5;
  stroke-linejoin: round;
}

.rail .thin {
  stroke-width: 1.5;
}

.road polyline {
  fill: none;
  stroke: #fff;
  stroke-width: 3;
  stroke-linejoin: round;
  stroke-linecap: round;
}

.road .major {
  stroke-width: 5.5;
}

.road .fine {
  stroke-width: 2;
}

.border-dash polyline {
  fill: none;
  stroke: #b3b3ad;
  stroke-width: 4;
  stroke-dasharray: 10 6;
}

.site polygon,
.site rect {
  fill: #8b8cb9;
  stroke: #000;
  stroke-width: 2.5;
  stroke-linejoin: miter;
}

.site polyline {
  fill: none;
  stroke: #000;
  stroke-width: 4;
}

.boundary {
  fill: none;
  stroke: #c75a5f;
  stroke-width: 5.5;
  stroke-linejoin: round;
}

.boundary-dash {
  fill: none;
  stroke: #f00;
  stroke-width: 4;
  stroke-dasharray: 6 6;
}

.place text {
  fill: #111;
  font-family: "Noto Sans", sans-serif;
  font-size: 25px;
  stroke: rgba(255, 255, 255, 0.85);
  stroke-width: 5px;
  paint-order: stroke;
  text-anchor: middle;
}

.place .from-start {
  text-anchor: start;
}

.place .from-end {
  text-anchor: end;
}

.place .city {
  font-size: 31px;
}

.map-controls {
  position: absolute;
  top: 20px;
  right: 20px;
  width: 58px;
  border-radius: 8px;
  background: #fff;
  box-shadow: 0 0 0 4px rgba(0, 0, 0, 0.1);
}

.ctrl-btn {
  display: block;
  width: 58px;
  height: 58px;
  padding: 0;
  border: 0;
  background: none;
}

.ctrl-btn + .ctrl-btn {
  border-top: 2px solid #ddd;
}

.ctrl-btn svg {
  display: block;
  width: 44px;
  height: 44px;
  margin: 0 auto;
}

.glyph-line {
  fill: none;
  stroke: #333;
  stroke-width: 3.2;
  stroke-linecap: round;
}

.fullscreen-btn {
  position: absolute;
  top: 214px;
  right: 20px;
  width: 58px;
  height: 58px;
  padding: 10px;
  border: 0;
  border-radius: 8px;
  background: #fff;
  box-shadow: 0 0 0 4px rgba(0, 0, 0, 0.1);
}

.fullscreen-btn svg {
  display: block;
  width: 38px;
  height: 38px;
}

.scale-bar {
  position: absolute;
  left: 20px;
  top: 936px;
  width: 145px;
  height: 42px;
  padding-left: 9px;
  border: 4px solid #333;
  border-top: 0;
  background: rgba(255, 255, 255, 0.75);
  color: #333;
  font-family: "Liberation Sans", sans-serif;
  font-size: 23px;
  line-height: 38px;
}

.attribution {
  position: absolute;
  top: 932px;
  right: 21px;
  display: flex;
  align-items: center;
  justify-content: space-between;
  width: 632px;
  height: 48px;
  padding-left: 15px;
  border-radius: 24px;
  background: #fff;
  color: rgba(0, 0, 0, 0.75);
  font-size: 23.6px;
  line-height: 48px;
}

.attribution-text {
  white-space: nowrap;
}

.info-btn {
  display: flex;
  flex: none;
  align-items: center;
  justify-content: center;
  width: 48px;
  height: 48px;
  border-radius: 50%;
  background: #f0f0f0;
}

.info-btn svg {
  width: 27px;
  height: 27px;
}

/* details */
.columns {
  display: flex;
}

.details {
  width: 1262px;
  margin-right: 61px;
}

.actions {
  flex: 1;
}

.heading {
  margin: 58px 0 0;
  font-size: 49.5px;
  font-weight: 700;
  line-height: 60px;
}

.summary,
.endpoints {
  border-collapse: collapse;
  table-layout: fixed;
}

.summary {
  width: 1262px;
  margin-top: 65px;
}

.summary th,
.summary td,
.endpoints th,
.endpoints td {
  padding: 15px 20px 23px 2px;
  border-bottom: 2px solid #b1b4b6;
  font-weight: 400;
  letter-spacing: -0.3px;
  text-align: left;
  vertical-align: top;
}

.summary th,
.endpoints th {
  font-weight: 700;
  letter-spacing: 0.2px;
}

.summary th {
  width: 400px;
}

.action-list {
  margin: 42px 0 0;
  padding: 0;
  list-style: none;
  letter-spacing: -0.2px;
}

.action-list li {
  margin-bottom: 30px;
}

.endpoints-heading {
  margin-top: 96px;
}

.endpoints {
  width: 1918px;
  margin-top: 66px;
}

.endpoints th:nth-child(-n+4),
.endpoints td:nth-child(-n+4) {
  width: 391px;
}

.endpoint-error {
  margin-left: 2px;
  padding-left: 10px;
  border-left: 10px solid #d4351c;
}

.error-message {
  margin: 0;
  color: #d4351c;
  font-size: 38px;
  font-weight: 700;
  line-height: 40px;
}

.endpoints.nested {
  width: 1896px;
  margin-top: 0;
}

.endpoints.nested td {
  padding: 24px 0 23px;
}

.endpoints.nested td:nth-child(-n+4) {
  width: 387.5px;
}

.url {
  display: inline-block;
  height: 50px;
  color: #0b0c0c;
  font-family: "DejaVu Sans Mono", monospace;
  font-size: 37.8px;
  letter-spacing: 0;
  line-height: 50px;
  vertical-align: top;
}

.manage-link {
  display: inline-block;
  margin: 56px 0 0 -4px;
  letter-spacing: -0.2px;
}
```
